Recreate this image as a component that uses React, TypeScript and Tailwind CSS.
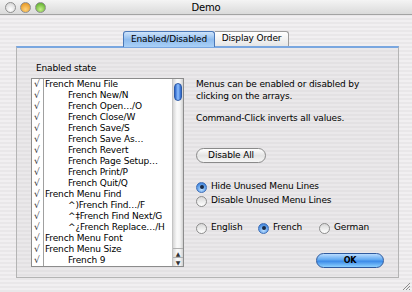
import React from "react";

const items: [string, boolean][] = [
  ["French Menu File", false],
  ["French New/N", true],
  ["French Open…/O", true],
  ["French Close/W", true],
  ["French Save/S", true],
  ["French Save As…", true],
  ["French Revert", true],
  ["French Page Setup…", true],
  ["French Print/P", true],
  ["French Quit/Q", true],
  ["French Menu Find", false],
  ["^)French Find…/F", true],
  ["^‡French Find Next/G", true],
  ["^¿French Replace…/H", true],
  ["French Menu Font", false],
  ["French Menu Size", false],
  ["French 9", true],
];

function Light({ c }: { c: string }) {
  return (
    <div
      className="w-[11px] h-[11px] rounded-full border border-[#8f8f8f]"
      style={{ background: c }}
    />
  );
}

function Radio({ on }: { on: boolean }) {
  return on ? (
    <div className="w-[11px] h-[11px] rounded-full border border-[#3f6fb8] bg-[radial-gradient(circle_at_50%_70%,#bfe0ff_0%,#5a9be8_60%,#2e6cc9_100%)] flex items-center justify-center shrink-0">
      <div className="w-[4px] h-[4px] rounded-full bg-[#1a2a44]" />
    </div>
  ) : (
    <div className="w-[11px] h-[11px] rounded-full border border-[#8d8d8d] bg-[linear-gradient(to_bottom,#d8d8d8,#ffffff)] shrink-0" />
  );
}

export default function App() {
  const stripes =
    "bg-[repeating-linear-gradient(to_bottom,#f1eff1_0px,#f1eff1_2px,#e9e7e9_2px,#e9e7e9_4px)]";
  return (
    <div
      className={`w-[412px] h-[292px] relative overflow-hidden ${stripes} text-black text-[9px] tracking-[-0.15px]`}
      style={{ fontFamily: '"DejaVu Sans", "Liberation Sans", sans-serif' }}
    >
      {/* title bar */}
      <div className="h-[15px] relative flex items-center border-b border-[#a3a3a3] bg-[linear-gradient(to_bottom,#f4f4f4,#dadada)]">
        <div className="flex gap-[4px] pl-[5px]">
          <Light c="radial-gradient(circle at 50% 70%, #ffffff, #cfcfcf)" />
          <Light c="radial-gradient(circle at 50% 70%, #ffd27a, #e08a10)" />
          <Light c="radial-gradient(circle at 50% 70%, #c6f08a, #4aa21a)" />
        </div>
        <div className="absolute inset-0 flex items-center justify-center text-[10px]">
          Demo
        </div>
      </div>

      {/* tabs */}
      <div className="mt-[16px] h-[15px] flex justify-center relative z-10">
        <div className="w-[92px] h-[16px] flex items-center justify-center rounded-t-[3px] border border-[#4a78b8] border-b-0 bg-[linear-gradient(to_bottom,#cfe4fb,#8fbcee_50%,#a9d0f7)]">
          Enabled/Disabled
        </div>
        <div className="w-[74px] h-[15px] flex items-center justify-center rounded-tr-[3px] border border-l-0 border-[#9a9a9a] border-b-0 bg-[linear-gradient(to_bottom,#ffffff,#e6e6e6)]">
          Display Order
        </div>
      </div>

      {/* panel */}
      <div className="ml-[16px] w-[383px] h-[232px] border border-[#b4b4b4] border-t-[2px] border-t-[#7aa7e0] bg-[repeating-linear-gradient(to_bottom,#eae8ea_0px,#eae8ea_2px,#e3e1e3_2px,#e3e1e3_4px)] px-[14px] pt-[14px] flex">
        {/* left column */}
        <div className="w-[153px] flex flex-col">
          <div className="h-[12px] leading-[12px] pl-[5px]">Enabled state</div>
          <div className="mt-[4px] h-[189px] border border-[#8c8c8c] bg-white flex">
            <div className="w-[12px] border-r border-[#a0a0a0] flex flex-col text-[#333]">
              {items.map((_, i) => (
                <div key={i} className="h-[11px] leading-[11px] pl-[2px]">
                  √
                </div>
              ))}
            </div>
            <div className="flex-1 flex flex-col pl-[1px] overflow-hidden whitespace-nowrap">
              {items.map(([t, ind], i) => (
                <div
                  key={i}
                  className={`h-[11px] leading-[11px] ${ind ? "pl-[23px]" : ""}`}
                >
                  {t}
                </div>
              ))}
            </div>
            {/* scrollbar */}
            <div className="w-[11px] border-l border-[#c4c4c4] bg-[linear-gradient(to_right,#d6d6d6,#fafafa_40%,#f4f4f4_70%,#d0d0d0)] flex flex-col">
              <div className="mt-[4px] mx-[1px] h-[18px] rounded-[5px] border border-[#2d5aa6] bg-[linear-gradient(to_right,#2a63c8,#8ec0ff_50%,#2a63c8)]" />
              <div className="flex-1" />
              <div className="h-[9px] border-t border-[#b0b0b0] flex items-center justify-center text-[6px] text-[#333]">
                ▲
              </div>
              <div className="h-[9px] border-t border-[#b0b0b0] flex items-center justify-center text-[6px] text-[#333]">
                ▼
              </div>
            </div>
          </div>
        </div>

        {/* right column */}
        <div className="ml-[12px] flex-1 flex flex-col pt-[16px]">
          <div className="leading-[12px]">Menus can be enabled or disabled by</div>
          <div className="leading-[12px]">clicking on the arrays.</div>
          <div className="leading-[12px] mt-[10px]">Command-Click inverts all values.</div>
          <div className="mt-[24px] w-[70px] h-[15px] rounded-full border border-[#8a8a8a] bg-[linear-gradient(to_bottom,#ffffff,#e4e4e4_50%,#f6f6f6)] flex items-center justify-center">
            Disable All
          </div>
          <div className="mt-[17px] h-[14px] flex items-center gap-[4px]">
            <Radio on />
            <span>Hide Unused Menu Lines</span>
          </div>
          <div className="h-[14px] flex items-center gap-[4px]">
            <Radio on={false} />
            <span>Disable Unused Menu Lines</span>
          </div>
          <div className="mt-[13px] h-[14px] flex items-center">
            <div className="w-[62px] flex items-center gap-[4px]">
              <Radio on={false} />
              <span>English</span>
            </div>
            <div className="w-[61px] flex items-center gap-[4px]">
              <Radio on />
              <span>French</span>
            </div>
            <div className="flex items-center gap-[4px]">
              <Radio on={false} />
              <span>German</span>
            </div>
          </div>
          <div className="mt-[18px] flex justify-end">
            <div className="w-[68px] h-[15px] rounded-full border border-[#2f5a9e] bg-[linear-gradient(to_bottom,#b9dcff,#5ea7f0_45%,#3b8ae8_55%,#8cd0ff)] flex items-center justify-center font-bold text-[8px]">
              OK
            </div>
          </div>
        </div>
      </div>

      {/* resize grip */}
      <svg className="absolute right-[1px] bottom-[1px]" width="11" height="11" viewBox="0 0 11 11">
        <path d="M10 3 L3 10 M10 6 L6 10 M10 9 L9 10" stroke="#8c8c8c" strokeWidth="1" />
      </svg>
    </div>
  );
}
